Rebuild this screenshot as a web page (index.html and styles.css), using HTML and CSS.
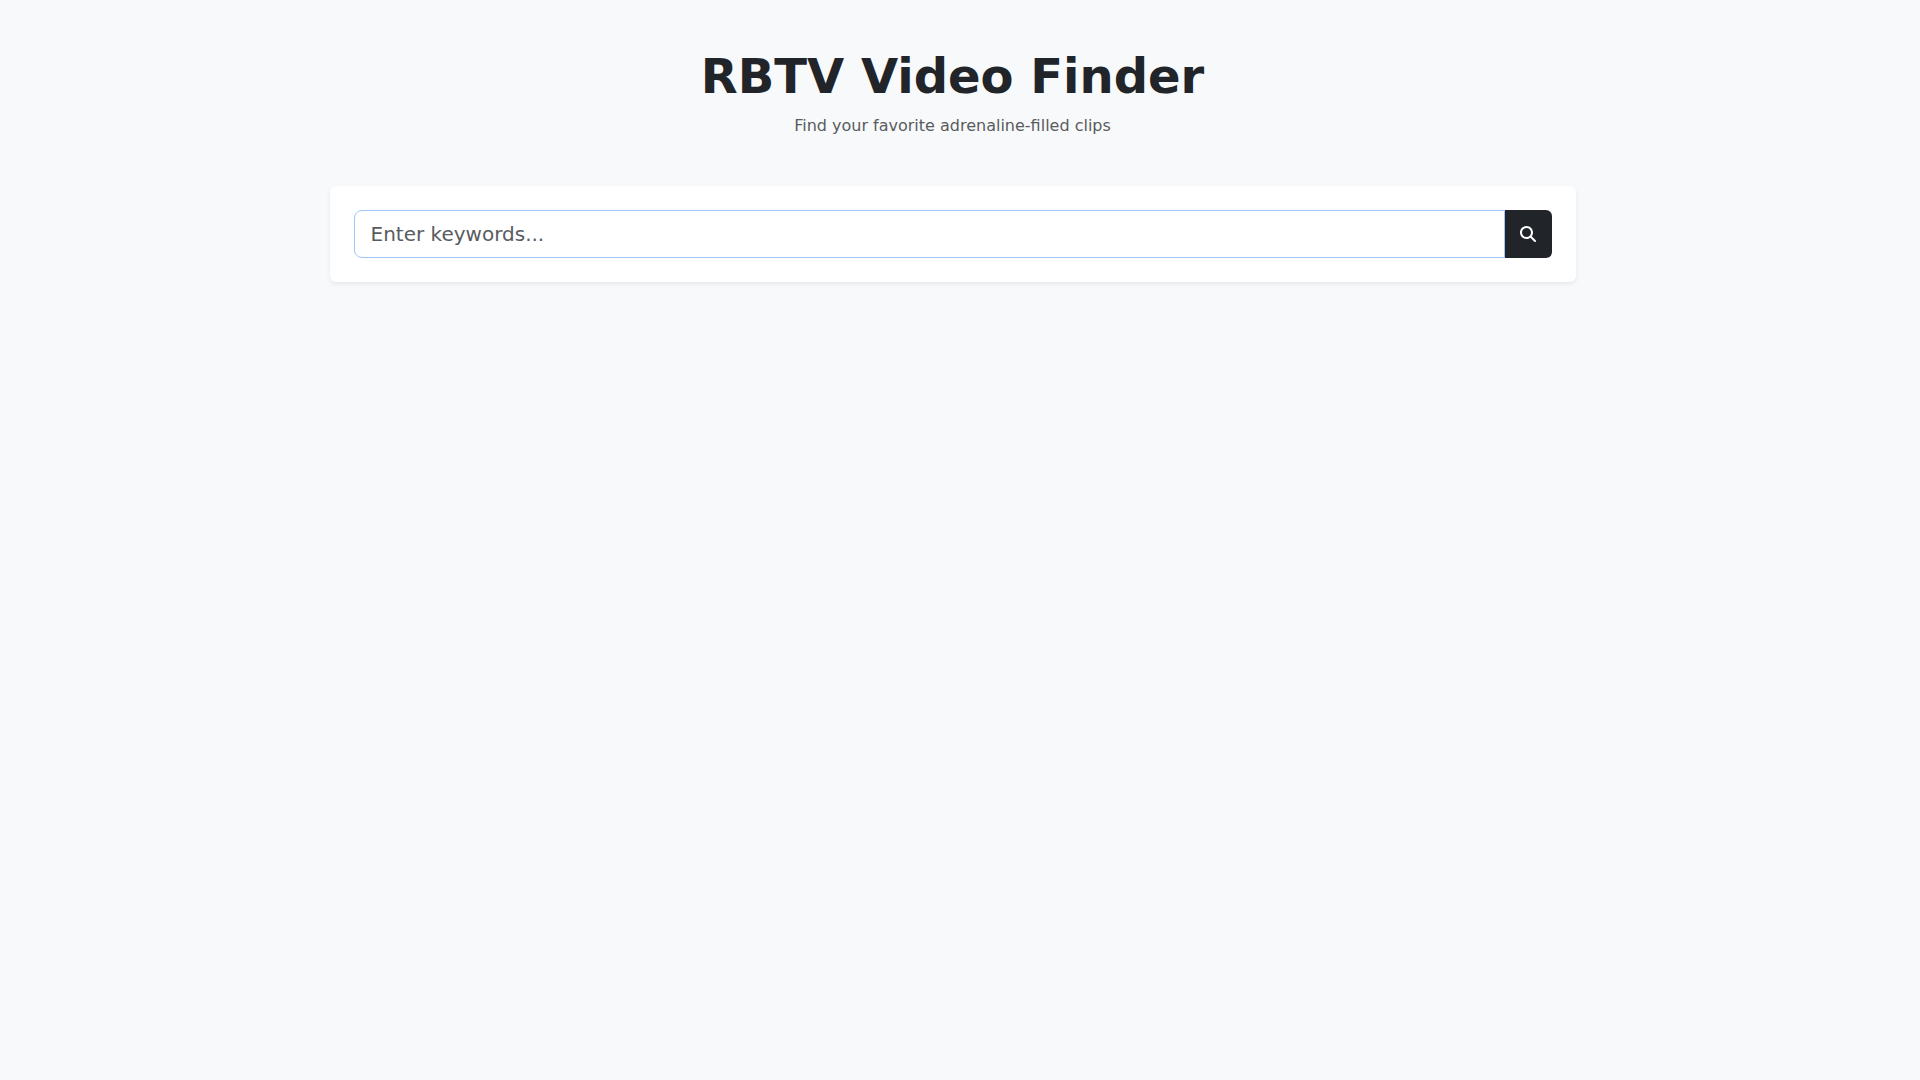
FILE: index.html
```html
<!DOCTYPE html>
<html lang="en">
<head>
<meta charset="utf-8">
<meta name="viewport" content="width=device-width, initial-scale=1">
<title>RBTV Video Finder</title>
<link rel="stylesheet" href="styles.css">
</head>
<body>
<main class="container">
  <header class="intro">
    <h1 class="title">RBTV Video Finder</h1>
    <p class="tagline">Find your favorite adrenaline-filled clips</p>
  </header>
  <form class="card" role="search">
    <div class="input-group">
      <input class="field" type="text" placeholder="Enter keywords..." aria-label="Keywords">
      <button class="submit" type="submit" aria-label="Search">
        <svg class="icon" viewBox="0 0 512 512" aria-hidden="true"><path fill="currentColor" d="M416 208c0 45.900-14.900 88.300-40 122.700L502.600 457.400c12.500 12.500 12.500 32.800 0 45.300s-32.800 12.500-45.300 0L330.700 376c-34.400 25.200-76.800 40-122.700 40C93.100 416 0 322.900 0 208S93.100 0 208 0S416 93.100 416 208zM208 352a144 144 0 1 0 0-288 144 144 0 1 0 0 288z"/></svg>
      </button>
    </div>
  </form>
</main>
</body>
</html>
```
FILE: styles.css
```css
*, *::before, *::after { box-sizing: border-box; }

body {
  margin: 0;
  padding: 48px 15px 48px 0;
  background: #f8f9fa;
  color: #212529;
  font-family: "DejaVu Sans", sans-serif;
  font-size: 16px;
  line-height: 24px;
}

.container {
  max-width: 1270px;
  margin: 0 auto;
  padding: 0 12px;
}

.intro {
  margin-bottom: 48px;
  text-align: center;
}

.title {
  margin: 0 0 10px;
  font-size: 48px;
  font-weight: 700;
  line-height: 56px;
}

.tagline {
  margin: 0;
  color: #595c5f;
}

.card {
  padding: 24px;
  border-radius: 6px;
  background: #fff;
  box-shadow: 0 2px 4px rgba(0, 0, 0, 0.075);
}

.input-group { display: flex; }

.field {
  flex: 1;
  min-width: 0;
  height: 48px;
  padding: 8px 16px;
  border: 1px solid #9ec5fe;
  border-radius: 8px 0 0 8px;
  outline: 0;
  background: #fff;
  color: #212529;
  font: inherit;
  font-size: 20px;
}

.field::placeholder { color: #595c5f; opacity: 1; }

.submit {
  display: flex;
  align-items: center;
  justify-content: center;
  width: 47px;
  padding: 0;
  border: 0;
  border-radius: 0 6px 6px 0;
  background: #212529;
  color: #fff;
}

.icon { width: 16px; height: 16px; }
```
